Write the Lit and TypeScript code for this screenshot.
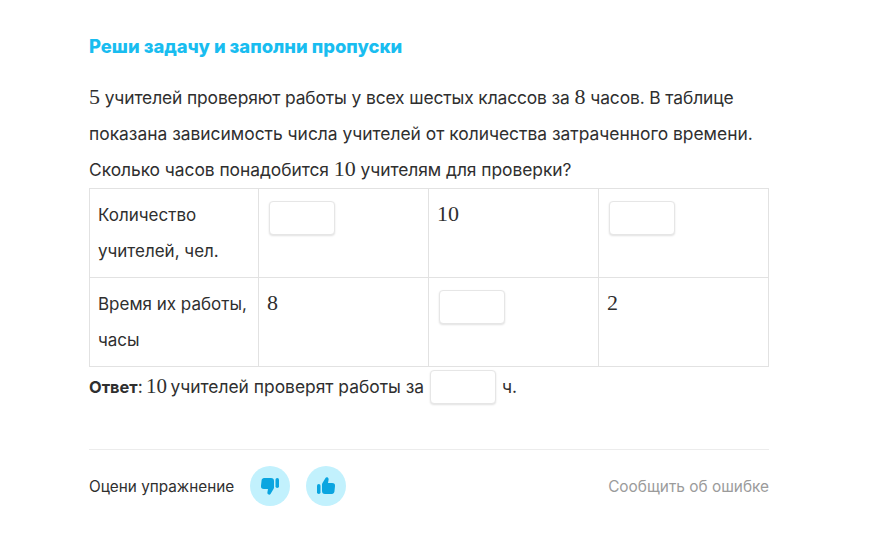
import { LitElement, html, css } from "lit";
import { customElement } from "lit/decorators.js";

const m = (s: string) => html`<span class="m">${s}</span>`;
const gap = () => html`<span class="gap"></span>`;
const thumb = "M4 2h7a3 3 0 0 1 3 3v6.500c0 .6-.2 1.100-.5 1.600L10.500 18c-.6 1-2.500.8-3-.5-.2-.6-.1-1.200 0-1.800L8 13H4a3 3 0 0 1-3-3.300l.6-5.500C1.800 3 2.800 2 4 2z";

@customElement("app-root")
export class AppRoot extends LitElement {
  static styles = css`
    :host { display: block; width: 869px; height: 534px; background: #fff; font-family: "Inter", sans-serif; color: #2f2f2f; overflow: hidden; }
    .page { width: 680px; margin-left: 89px; padding-top: 34px; box-sizing: border-box; }
    h1 { margin: 0 0 21px; font-size: 18.4px; line-height: 25px; font-weight: 800; color: #19bdf0; }
    .text { font-size: 17.4px; line-height: 36px; }
    .line { display: block; white-space: nowrap; }
    .l1 { letter-spacing: -0.12px; }
    .l3 { letter-spacing: -0.05px; }
    .m { font-family: "Liberation Serif", serif; font-size: 22px; line-height: 1; letter-spacing: 0; }
    table { border-collapse: collapse; width: 680px; table-layout: fixed; font-size: 17px; line-height: 36px; }
    td { width: 170px; height: 89px; border: 1px solid #e2e2e2; padding: 8px; vertical-align: top; box-sizing: border-box; }
    td.first { width: 169px; }
    td.g { padding: 12px 8px 4px 10px; }
    .gap { display: block; width: 66px; height: 34px; box-sizing: border-box; border: 1px solid #e6e6e6; border-radius: 4px; background: #fff; box-shadow: 0 1px 2px rgba(0,0,0,.12); }
    .ans { font-size: 17.4px; line-height: 40px; display: flex; align-items: center; gap: 6px; }
    .ans b { font-size: 16.4px; }
    .ans .m { font-size: 21px; margin: 0 -1.5px; }
    .rate { margin-top: 42px; border-top: 1px solid #ececec; padding-top: 16px; display: flex; align-items: center; font-size: 15.4px; }
    .rate .lab { margin-right: 16px; font-size: 15.3px; }
    .btn { width: 40px; height: 40px; border-radius: 50%; background: #c2f1fd; display: flex; align-items: center; justify-content: center; margin-right: 16px; }
    .report { margin-left: auto; color: #9b9b9b; font-size: 15.4px; }
    svg { display: block; fill: #0aa5e0; }
    .flip { transform: rotate(180deg); }
  `;
  render() {
    const icon = (cls: string) => html`<div class="btn"><svg class=${cls} width="20" height="20" viewBox="0 0 20 20"><rect x="15.500" y="2" width="3.500" height="10" rx="1.750"/><path d=${thumb}/></svg></div>`;
    return html`<div class="page">
      <h1>Реши задачу и заполни пропуски</h1>
      <div class="text">
        <span class="line l1">${m("5")} учителей проверяют работы у всех шестых классов за ${m("8")} часов. В таблице</span>
        <span class="line">показана зависимость числа учителей от количества затраченного времени.</span>
        <span class="line l3">Сколько часов понадобится ${m("10")} учителям для проверки?</span>
      </div>
      <table>
        <tr><td class="first">Количество учителей, чел.</td><td class="g">${gap()}</td><td>${m("10")}</td><td class="g">${gap()}</td></tr>
        <tr><td class="first">Время их работы, часы</td><td>${m("8")}</td><td class="g">${gap()}</td><td>${m("2")}</td></tr>
      </table>
      <div class="ans"><span><b>Ответ</b>: ${m("10")} учителей проверят работы за</span>${gap()}<span>ч.</span></div>
      <div class="rate">
        <span class="lab">Оцени упражнение</span>
        ${icon("")}
        ${icon("flip")}
        <span class="report">Сообщить об ошибке</span>
      </div>
    </div>`;
  }
}
